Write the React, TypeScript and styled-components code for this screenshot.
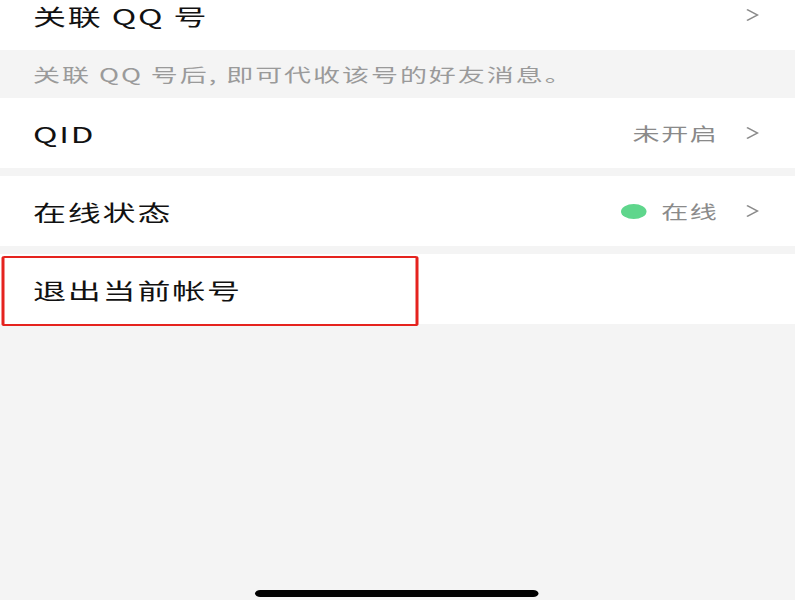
import React from 'react';
import styled, { createGlobalStyle } from 'styled-components';

const GlobalStyle = createGlobalStyle`
  html, body {
    margin: 0;
    padding: 0;
    background: #ffffff;
    overflow: hidden;
  }
  body {
    font-family: "Noto Sans CJK SC", "Noto Sans", sans-serif;
  }
`;

// the capture is stretched sideways, so the phone screen is drawn at its own
// width and widened as a whole
const Screen = styled.div`
  width: 530px;
  height: 600px;
  background: #f4f4f4;
  display: flex;
  flex-direction: column;
  overflow: hidden;
  transform: scaleX(1.5);
  transform-origin: 0 0;
`;

const List = styled.div`
  display: flex;
  flex-direction: column;
  margin-top: -20px;
`;

const Row = styled.div<{ $gapBelow?: boolean }>`
  position: relative;
  height: 70px;
  background: #ffffff;
  display: flex;
  align-items: center;
  padding: 0 24px 0 22px;
  margin-bottom: ${(p) => (p.$gapBelow ? '8px' : '0')};
`;

const Label = styled.div`
  flex: 1;
  font-size: 22px;
  letter-spacing: 1.2px;
  color: #111111;
`;

const Caption = styled.div`
  height: 48px;
  display: flex;
  align-items: center;
  padding-left: 22px;
  font-size: 18px;
  letter-spacing: 1.3px;
  color: #9a9a9a;
`;

const Value = styled.div`
  display: flex;
  align-items: center;
  font-size: 18px;
  letter-spacing: 1.1px;
  color: #8a8a8a;
  margin-right: 18px;
`;

const StatusDot = styled.span`
  width: 17px;
  height: 15px;
  border-radius: 50%;
  background: #5fd68c;
  margin-right: 10px;
`;

const Highlight = styled.div`
  position: absolute;
  left: 1px;
  top: 2px;
  width: 274px;
  height: 66px;
  border: 2px solid #e5231e;
  border-radius: 2px;
  pointer-events: none;
`;

const HomeBar = styled.div`
  margin: auto 0 3px 170px;
  width: 189px;
  height: 7px;
  border-radius: 4px;
  background: #000000;
`;

const Chevron = () => (
  <svg width="9" height="14" viewBox="0 0 9 14">
    <path d="M1 1.5 L8 7 L1 12.5" fill="none" stroke="#8a8a8a" strokeWidth="1.4" />
  </svg>
);

export default function App() {
  return (
    <Screen>
      <GlobalStyle />
      <List>
        <Row>
          <Label>关联 QQ 号</Label>
          <Chevron />
        </Row>
        <Caption>关联 QQ 号后, 即可代收该号的好友消息。</Caption>
        <Row $gapBelow>
          <Label>QID</Label>
          <Value>未开启</Value>
          <Chevron />
        </Row>
        <Row $gapBelow>
          <Label>在线状态</Label>
          <Value>
            <StatusDot />
            在线
          </Value>
          <Chevron />
        </Row>
        <Row>
          <Label>退出当前帐号</Label>
          <Highlight />
        </Row>
      </List>
      <HomeBar />
    </Screen>
  );
}
